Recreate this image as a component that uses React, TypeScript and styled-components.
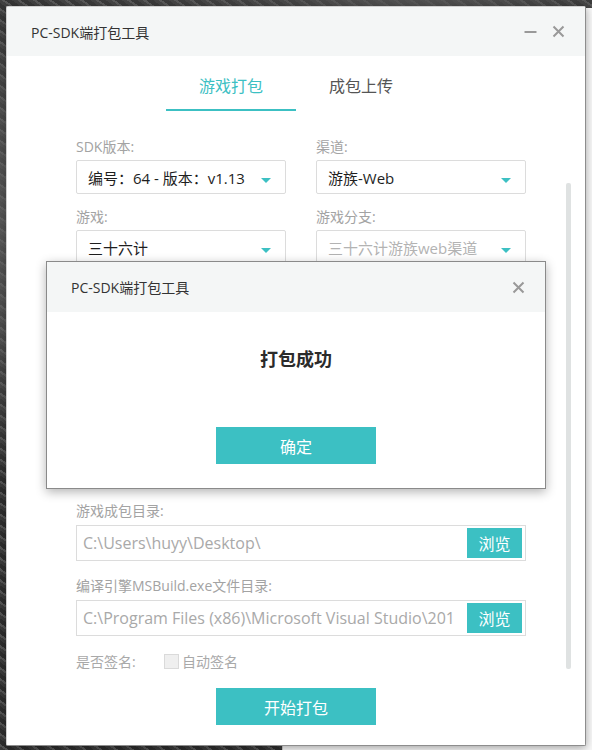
import React from "react";
import styled, { createGlobalStyle } from "styled-components";

const TEAL = "#3cc0c3";
const FONT = `"Open Sans", "Noto Sans CJK SC", sans-serif`;

const GlobalStyle = createGlobalStyle`
  html, body {
    margin: 0;
    padding: 0;
  }
  body {
    width: 592px;
    height: 750px;
    overflow: hidden;
    font-family: ${FONT};
    background:
      radial-gradient(circle at 20% 30%, #6d6d6d 0, transparent 40%),
      radial-gradient(circle at 70% 10%, #5a5a5a 0, transparent 35%),
      repeating-linear-gradient(35deg, #3b3b3b 0 3px, #555 3px 5px, #2e2e2e 5px 9px);
  }
`;

const Desktop = styled.div`
  position: relative;
  width: 592px;
  height: 750px;
`;

/* window of another app peeking out behind */
const BackWindow = styled.div`
  position: absolute;
  left: 282px;
  top: 8px;
  right: 0;
  bottom: 0;
  background: #f8f8f8;
  border-left: 1px solid #ccc;
`;

const Window = styled.div`
  position: absolute;
  left: 6px;
  top: 6px;
  width: 578px;
  height: 738px;
  background: #fff;
  border: 1px solid #8d8d8d;
  border-top-color: #d0d0d0;
  border-left-color: #d0d0d0;
  border-radius: 2px;
  box-shadow: 0 2px 8px rgba(0, 0, 0, 0.35);
  display: flex;
  flex-direction: column;
  overflow: hidden;
`;

const TitleBar = styled.div<{ $height: number; $pad: number }>`
  height: ${(p) => p.$height}px;
  flex-shrink: 0;
  background: #f4f6f6;
  display: flex;
  align-items: center;
  padding: 0 20px 0 ${(p) => p.$pad}px;
  color: #333;
  font-size: 14px;
`;

const TitleText = styled.div`
  flex: 1;
`;

const TitleButtons = styled.div`
  display: flex;
  align-items: center;
  gap: 14px;
`;

const IconBtn = styled.span`
  display: flex;
  width: 14px;
  height: 14px;
  align-items: center;
  justify-content: center;
`;

const Tabs = styled.div`
  display: flex;
  justify-content: center;
  padding-top: 14px;
`;

const Tab = styled.div<{ $active?: boolean }>`
  width: 130px;
  height: 39px;
  text-align: center;
  font-size: 16px;
  line-height: 32px;
  color: ${(p) => (p.$active ? TEAL : "#555")};
  border-bottom: 2px solid ${(p) => (p.$active ? TEAL : "transparent")};
`;

const Body = styled.div`
  position: relative;
  flex: 1;
  padding: 26px 59px 0 69px;
`;

const ScrollBar = styled.div`
  position: absolute;
  right: 14px;
  top: 72px;
  width: 5px;
  height: 486px;
  background: #dfe2e2;
  border-radius: 2px;
`;

const Grid = styled.div`
  display: grid;
  grid-template-columns: 210px 210px;
  column-gap: 30px;
`;

/* rows that sit under the dialog */
const Covered = styled.div`
  height: 224px;
`;

const Field = styled.div<{ $gap?: number }>`
  display: flex;
  flex-direction: column;
  margin-bottom: ${(p) => p.$gap ?? 13}px;
`;

const Label = styled.div<{ $gap?: number }>`
  font-size: 14px;
  line-height: 20px;
  color: #a3a3a3;
  margin-bottom: ${(p) => p.$gap ?? 3}px;
`;

const Select = styled.div<{ $muted?: boolean }>`
  height: 32px;
  border: 1px solid #dcdcdc;
  border-radius: 2px;
  display: flex;
  align-items: center;
  padding: 0 14px 0 11px;
  font-size: 15px;
  color: ${(p) => (p.$muted ? "#b3b3b3" : "#1e1e1e")};
  white-space: nowrap;
  overflow: hidden;
`;

const SelectText = styled.span`
  flex: 1;
  min-width: 0;
  overflow: hidden;
`;

const Caret = styled.span`
  width: 0;
  height: 0;
  margin-top: 6px;
  border-left: 5px solid transparent;
  border-right: 5px solid transparent;
  border-top: 5px solid ${TEAL};
`;

const PathBox = styled.div`
  height: 34px;
  border: 1px solid #dcdcdc;
  display: flex;
  align-items: center;
  padding: 0 3px 0 6px;
`;

const PathText = styled.span`
  flex: 1;
  min-width: 0;
  font-size: 16px;
  color: #a9a9a9;
  white-space: nowrap;
  overflow: hidden;
`;

const Browse = styled.button`
  width: 55px;
  height: 30px;
  border: none;
  background: ${TEAL};
  color: #fff;
  font-family: ${FONT};
  font-size: 16px;
  padding: 0;
  flex-shrink: 0;
`;

const SignRow = styled.div`
  display: flex;
  align-items: center;
  height: 20px;
  font-size: 14px;
  color: #a9a9a9;
`;

const SignLabel = styled.span`
  width: 88px;
`;

const Check = styled.span`
  width: 13px;
  height: 13px;
  border: 1px solid #dadada;
  background: #efefef;
  margin-right: 3px;
`;

const PrimaryButton = styled.button<{ $top: number; $left?: number }>`
  display: block;
  width: 160px;
  height: 37px;
  margin: ${(p) => p.$top}px auto 0 ${(p) => (p.$left === undefined ? "auto" : `${p.$left}px`)};
  border: none;
  background: ${TEAL};
  color: #fff;
  font-family: ${FONT};
  font-size: 16px;
  padding: 0;
`;

const Dialog = styled.div`
  position: absolute;
  left: 46px;
  top: 261px;
  width: 498px;
  height: 226px;
  background: #fff;
  border: 1px solid #8a8a8a;
  box-shadow: 0 3px 10px rgba(0, 0, 0, 0.3);
  display: flex;
  flex-direction: column;
`;

const DialogBody = styled.div`
  flex: 1;
  display: flex;
  flex-direction: column;
  align-items: center;
`;

const Message = styled.div`
  margin-top: 35px;
  font-size: 18px;
  font-weight: bold;
  color: #2b2b2b;
  line-height: 24px;
`;

const CloseIcon = () => (
  <svg width="13" height="13" viewBox="0 0 13 13">
    <path d="M1.5 1.5 L11.5 11.5 M11.5 1.5 L1.5 11.5" stroke="#999" strokeWidth="2" />
  </svg>
);

const MinIcon = () => (
  <svg width="13" height="13" viewBox="0 0 13 13">
    <path d="M0.5 7 H12.5" stroke="#999" strokeWidth="2" />
  </svg>
);

function SelectField({ label, value, muted }: { label: string; value: string; muted?: boolean }) {
  return (
    <Field>
      <Label>{label}</Label>
      <Select $muted={muted}>
        <SelectText>{value}</SelectText>
        <Caret />
      </Select>
    </Field>
  );
}

function PathField({ label, value }: { label: string; value: string }) {
  return (
    <Field $gap={15}>
      <Label $gap={4}>{label}</Label>
      <PathBox>
        <PathText>{value}</PathText>
        <Browse>浏览</Browse>
      </PathBox>
    </Field>
  );
}

export default function App() {
  return (
    <Desktop>
      <GlobalStyle />
      <BackWindow />
      <Window>
        <TitleBar $height={49} $pad={24}>
          <TitleText>PC-SDK端打包工具</TitleText>
          <TitleButtons>
            <IconBtn>
              <MinIcon />
            </IconBtn>
            <IconBtn>
              <CloseIcon />
            </IconBtn>
          </TitleButtons>
        </TitleBar>
        <Tabs>
          <Tab $active>游戏打包</Tab>
          <Tab>成包上传</Tab>
        </Tabs>
        <Body>
          <ScrollBar />
          <Grid>
            <SelectField label="SDK版本:" value="编号：64 - 版本：v1.13" />
            <SelectField label="渠道:" value="游族-Web" />
            <SelectField label="游戏:" value="三十六计" />
            <SelectField label="游戏分支:" value="三十六计游族web渠道" muted />
          </Grid>
          <Covered />
          <PathField label="游戏成包目录:" value="C:\Users\huyy\Desktop\" />
          <PathField
            label="编译引擎MSBuild.exe文件目录:"
            value="C:\Program Files (x86)\Microsoft Visual Studio\201"
          />
          <SignRow>
            <SignLabel>是否签名:</SignLabel>
            <Check />
            <span>自动签名</span>
          </SignRow>
          <PrimaryButton $top={17} $left={140}>
            开始打包
          </PrimaryButton>
        </Body>
      </Window>
      <Dialog>
        <TitleBar $height={50} $pad={24}>
          <TitleText>PC-SDK端打包工具</TitleText>
          <IconBtn>
            <CloseIcon />
          </IconBtn>
        </TitleBar>
        <DialogBody>
          <Message>打包成功</Message>
          <PrimaryButton $top={56}>确定</PrimaryButton>
        </DialogBody>
      </Dialog>
    </Desktop>
  );
}
